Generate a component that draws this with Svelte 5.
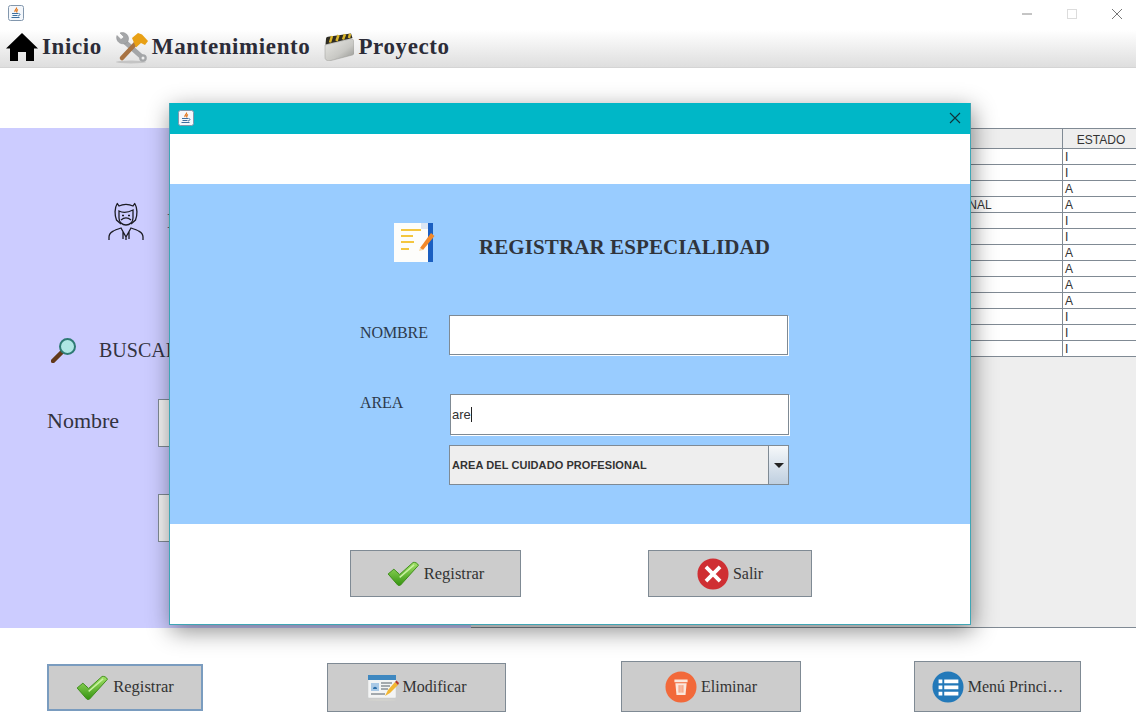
<script>
  const rows = [
    { area: '', estado: 'I' },
    { area: '', estado: 'I' },
    { area: '', estado: 'A' },
    { area: 'AREA DEL CUIDADO PROFESIONAL', estado: 'A' },
    { area: '', estado: 'I' },
    { area: '', estado: 'I' },
    { area: '', estado: 'A' },
    { area: '', estado: 'A' },
    { area: '', estado: 'A' },
    { area: '', estado: 'A' },
    { area: '', estado: 'I' },
    { area: '', estado: 'I' },
    { area: '', estado: 'I' }
  ];
</script>

{#snippet javaIcon()}
  <svg class="java" viewBox="0 0 16 16" width="16" height="16">
    <rect x="0.5" y="0.5" width="15" height="15" rx="2" fill="#f4f7fb" stroke="#8297ad" />
    <path d="M8.5 2.5c1 1.5-2.5 2.500-1.500 4.500M10 4.500c-2 1-1.500 2-1 3" fill="none" stroke="#e2761b" stroke-width="1.200" />
    <path d="M4 8.500h6M4.500 10.500h5M3.500 12.500h8" stroke="#3d6f9e" stroke-width="1" />
    <path d="M10.500 8.500c2 0 2 2-.5 2.500" fill="none" stroke="#3d6f9e" />
  </svg>
{/snippet}

{#snippet checkIcon()}
  <svg viewBox="0 0 34 26" width="33" height="25">
    <defs>
      <linearGradient id="chk" x1="0" y1="0" x2="0" y2="1">
        <stop offset="0" stop-color="#a4e36a" />
        <stop offset="1" stop-color="#34930f" />
      </linearGradient>
    </defs>
    <path d="M1 13.500 7 8.500 13 14 27 1.500c2-.5 5 1 5.500 3L14 25c-1 .8-2 .8-3 0z" fill="url(#chk)" stroke="#3c8c18" stroke-width="1" />
    <path d="M13 17 28 4" stroke="#c8f2a0" stroke-width="1.500" fill="none" />
  </svg>
{/snippet}

<div class="window">
  <div class="titlebar">
    <span class="title-icon">{@render javaIcon()}</span>
    <div class="controls">
      <svg viewBox="0 0 10 10" width="10" height="10"><path d="M0 5h10" stroke="#8a8a8a" /></svg>
      <svg viewBox="0 0 10 10" width="10" height="10"><rect x="0.500" y="0.500" width="9" height="9" fill="none" stroke="#dcdcdc" /></svg>
      <svg viewBox="0 0 10 10" width="10" height="10"><path d="M0 0l10 10M10 0L0 10" stroke="#777" /></svg>
    </div>
  </div>

  <nav class="menubar">
    <div class="menu">
      <svg viewBox="0 0 32 28" width="32" height="28">
        <path d="M16 0 32 15.500h-4V28h-8v-9h-8v9H4V15.500H0z" fill="#000" />
      </svg>
      <span>Inicio</span>
    </div>
    <div class="menu">
      <svg class="tools" viewBox="0 0 32 32" width="32" height="32">
        <ellipse cx="15" cy="30" rx="15" ry="1.500" fill="#c4c4c4" />
        <path d="M9 10 27 26" stroke="#a4a6a8" stroke-width="5" stroke-linecap="round" />
        <path d="M1 3.500 5 7.500 8 5 4 1c4-1.500 8 1 8.500 5 .2 2-.5 3.500-2 5-2.500 1.500-6.500 1-8.500-1.500C.5 7.500.3 5.500 1 3.500z" fill="#a4a6a8" stroke="#8a8c8e" stroke-width=".5" />
        <circle cx="27" cy="26" r="3.800" fill="#a4a6a8" />
        <circle cx="27" cy="26" r="1.500" fill="#eee" />
        <path d="M6 26 21 10" stroke="#a87342" stroke-width="4.500" stroke-linecap="round" />
        <path d="M16 6 22 1l4 1.500L32 9l-3 4-4-2-5 4.500z" fill="#e8a015" />
      </svg>
      <span>Mantenimiento</span>
    </div>
    <div class="menu">
      <svg viewBox="0 0 30 28" width="30" height="28">
        <defs>
          <linearGradient id="folder" x1="0" y1="0" x2="1" y2="1">
            <stop offset="0" stop-color="#e9e9e5" />
            <stop offset="0.600" stop-color="#c8c8c4" />
            <stop offset="1" stop-color="#8f908c" />
          </linearGradient>
        </defs>
        <path d="M1 12 26 6c2.500-.5 4 .5 4 3v11c0 1-.5 1.500-1.500 2L7 27.500c-3.500.8-6-.5-6-3z" fill="url(#folder)" stroke="#9a9a96" stroke-width=".5" />
        <path d="M2 6c0-1.500 1-2 2-2.200L27 .5l1.500 4.500L1.500 11.500z" fill="#2e2c22" />
        <path d="M8 3 6 9.500M14.500 2 12.500 8M21 1.200 19 6.500M26 .8 25 5" stroke="#dcb62a" stroke-width="2.500" />
      </svg>
      <span>Proyecto</span>
    </div>
  </nav>

  <div class="gap"></div>

  <main class="main">
    <section class="panel">
      <div class="agent">
        <svg viewBox="0 0 36 38" width="36" height="38" fill="none" stroke="#1c1c24" stroke-width="1.300">
          <path d="M9 1l2 3c4-2 10-2 14 0l2-3M9 2c-2.500 4-2.500 11-.5 16l4.500 4M27 2c2.500 4 2.500 11 .5 16l-4.500 4" />
          <path d="M11 9c5 2.500 10 1 14-1v8c0 4-3 7-7 7s-7-3-7-7zM13 18c3-2.500 7-2.500 10 0M14 13.500h2M20 13.500h2" />
          <path d="M1 38v-3c0-5 6-7 12-9l5 9 5-9c6 2 12 4 12 9v3M15 30v7M21 30v7M18 35v3" />
        </svg>
        <h2>ESPECIALIDADES</h2>
      </div>

      <div class="search-title">
        <svg viewBox="0 0 26 26" width="26" height="26">
          <path d="M11 15 2 24" stroke="#63391a" stroke-width="4.500" stroke-linecap="round" />
          <circle cx="16.500" cy="9.500" r="7.500" fill="#aee6e4" stroke="#2e7a74" stroke-width="2" />
        </svg>
        <span>BUSCAR</span>
      </div>

      <div class="field">
        <label for="buscar-nombre">Nombre</label>
        <input id="buscar-nombre" />
      </div>
      <div class="field second">
        <input aria-label="Area" />
      </div>
    </section>

    <section class="table-wrap">
      <table>
        <thead>
          <tr><th class="c1">CODIGO</th><th class="c2">AREA</th><th class="c3">ESTADO</th></tr>
        </thead>
        <tbody>
          {#each rows as row}
            <tr><td></td><td>{row.area}</td><td>{row.estado}</td></tr>
          {/each}
        </tbody>
      </table>
    </section>
  </main>

  <footer class="footer">
    <button class="btn focused">{@render checkIcon()}<span>Registrar</span></button>
    <button class="btn edit">
      <svg viewBox="0 0 32 28" width="32" height="28">
        <rect x="1" y="2" width="28" height="23" rx="1" fill="#f3f4f4" stroke="#c9cccc" stroke-width=".5" />
        <rect x="1" y="2" width="28" height="5" fill="#3f88c0" />
        <rect x="4" y="10" width="8" height="8" fill="#a9c9e6" />
        <path d="M6 16c0-3 4-3 4 0z" fill="#2b6ea8" />
        <path d="M14 10h11M14 13h9M14 16h7M4 21h14" stroke="#545f66" stroke-width="1" />
        <path d="M18 23l3-6 7-8 3 3-8 8z" fill="#f2b632" />
        <path d="M28 9l1.500-1.500 2.500 2.500L31 12z" fill="#b5352c" />
        <ellipse cx="15" cy="27" rx="14" ry="1" fill="#d2d2ce" />
      </svg>
      <span>Modificar</span>
    </button>
    <button class="btn trash">
      <svg viewBox="0 0 34 34" width="32" height="32">
        <circle cx="17" cy="17" r="16.500" fill="#f2693a" />
        <path d="M10 9h14v3H10zM11 13h12l-1.200 12.500h-9.600z" fill="#fbe7dc" />
        <path d="M15 15v8M17 15v8M19 15v8" stroke="#f2693a" stroke-width=".8" />
      </svg>
      <span>Eliminar</span>
    </button>
    <button class="btn menu-btn">
      <svg viewBox="0 0 34 34" width="32" height="32">
        <circle cx="17" cy="17" r="16.500" fill="#2379b9" />
        <path d="M7 9h4v4H7zM7 15.500h4v4H7zM7 22h4v4H7zM13 9h15v4H13zM13 15.500h15v4H13zM13 22h15v4H13z" fill="#fff" />
      </svg>
      <span>Menú Princi…</span>
    </button>
  </footer>

  <div class="dialog">
    <div class="dialog-title">
      {@render javaIcon()}
      <svg class="close" viewBox="0 0 12 12" width="12" height="12"><path d="M1 1l10 10M11 1 1 11" stroke="#10333a" stroke-width="1.100" /></svg>
    </div>
    <div class="dialog-top"></div>
    <div class="dialog-form">
      <div class="dialog-head">
        <svg viewBox="0 0 41 40" width="41" height="40">
          <rect x="0" y="0" width="38" height="39" fill="#fdfdfb" />
          <rect x="34" y="0" width="5" height="39" fill="#1b5fc1" />
          <path d="M27 0h7v6h-7z" fill="#dbe6f3" />
          <path d="M7 7h20M7 13h12M7 19h13M7 26h8" stroke="#f4c63f" stroke-width="2" />
          <path d="M26 25 37 10l3.500 3L29 27z" fill="#f2892a" />
          <path d="M26 25l-1 3 4-1z" fill="#f5d9a8" />
        </svg>
        <h1>REGISTRAR ESPECIALIDAD</h1>
      </div>
      <div class="row nombre">
        <label for="esp-nombre">NOMBRE</label>
        <input id="esp-nombre" />
      </div>
      <div class="row area">
        <label for="esp-area">AREA</label>
        <div class="area-fields">
          <div id="esp-area" class="text-input">are<i class="caret"></i></div>
          <div class="combo">
            <span>AREA DEL CUIDADO PROFESIONAL</span>
            <div class="arrow"><b></b></div>
          </div>
        </div>
      </div>
    </div>
    <div class="dialog-actions">
      <button class="btn save">{@render checkIcon()}<span>Registrar</span></button>
      <button class="btn exit">
        <svg viewBox="0 0 34 34" width="32" height="32">
          <circle cx="17" cy="17" r="16.500" fill="#cf2f33" />
          <path d="M9.500 9.500l15 15M24.500 9.500l-15 15" stroke="#fff" stroke-width="4" />
        </svg>
        <span>Salir</span>
      </button>
    </div>
  </div>
</div>

<style>
  :global(body) {
    margin: 0;
    background: #fff;
  }

  .window {
    position: relative;
    width: 1136px;
    height: 726px;
    overflow: hidden;
    background: #fff;
    color: #333340;
    font-family: "Liberation Serif", serif;
  }

  .titlebar {
    height: 30px;
    display: flex;
    align-items: center;
    justify-content: space-between;
  }

  .title-icon {
    display: flex;
    margin: -4px 0 0 8px;
  }

  .controls {
    display: flex;
    gap: 35px;
    margin: -2px 14px 0 0;
  }

  .java {
    display: block;
  }

  .menubar {
    height: 33px;
    display: flex;
    align-items: center;
    gap: 14px;
    padding: 0 0 4px 6px;
    border-bottom: 1px solid #d4d4d4;
    background: linear-gradient(#ffffff, #dedede);
  }

  .menu {
    display: flex;
    align-items: center;
    gap: 4px;
    font-size: 23px;
    font-weight: bold;
    letter-spacing: 0.6px;
    color: #2c2c38;
  }

  .tools {
    margin-top: 2px;
  }

  .gap {
    height: 60px;
  }

  .main {
    height: 500px;
    display: flex;
  }

  .panel {
    width: 471px;
    flex: none;
    box-sizing: border-box;
    background: #ccccff;
    padding-top: 74px;
  }

  .agent {
    display: flex;
    align-items: center;
    gap: 23px;
    padding-left: 108px;
  }

  .agent h2 {
    margin: 0;
    font-size: 21px;
    font-weight: normal;
    white-space: nowrap;
  }

  .search-title {
    display: flex;
    align-items: center;
    gap: 22px;
    margin-top: 97px;
    padding-left: 51px;
    font-size: 20px;
  }

  .field {
    display: flex;
    align-items: center;
    margin-top: 36px;
    padding-left: 47px;
  }

  .field label {
    width: 111px;
    padding-bottom: 4px;
    font-size: 22px;
  }

  .field input {
    width: 250px;
    height: 48px;
    box-sizing: border-box;
    border: 1px solid #7f8a94;
    background: #f4f4f4;
  }

  .field.second {
    margin-top: 47px;
    padding-left: 158px;
  }

  .table-wrap {
    flex: 1;
    min-width: 0;
    overflow: hidden;
    box-sizing: border-box;
    background: #eeeeee;
    border-bottom: 1px solid #808a94;
  }

  table {
    width: 669px;
    table-layout: fixed;
    border-collapse: collapse;
    font-family: "Liberation Sans", sans-serif;
    font-size: 12px;
    color: #333;
    background: #fff;
  }

  th {
    height: 17px;
    padding: 2px 0 0;
    font-weight: normal;
    background: #eeeeee;
    border: 1px solid #808a94;
    border-left: 0;
  }

  td {
    height: 14px;
    padding: 1px 0 0 2px;
    line-height: 14px;
    white-space: nowrap;
    overflow: hidden;
    border-bottom: 1px solid #808a94;
    border-right: 1px solid #808a94;
  }

  .c1 {
    width: 312px;
  }

  .c2 {
    width: 278px;
  }

  .footer {
    display: flex;
    align-items: center;
    height: 76px;
    padding: 21px 0 0 47px;
  }

  .btn {
    display: flex;
    align-items: center;
    justify-content: center;
    gap: 4px;
    box-sizing: border-box;
    padding: 0;
    border: 1px solid #7f8a94;
    background: #cccccc;
    color: #333;
    font-family: "Liberation Serif", serif;
    font-size: 16px;
    flex: none;
  }

  .focused {
    width: 156px;
    height: 47px;
    border: 2px solid #7a9cbf;
    font-size: 16.5px;
  }

  .edit {
    width: 179px;
    height: 49px;
    margin-left: 124px;
  }

  .trash,
  .menu-btn {
    height: 51px;
    margin-top: -1px;
  }

  .trash {
    width: 180px;
    margin-left: 115px;
  }

  .menu-btn {
    width: 167px;
    margin-left: 113px;
  }

  /* modal window, sits over the page */
  .dialog {
    position: absolute;
    left: 169px;
    top: 103px;
    width: 802px;
    height: 522px;
    box-sizing: border-box;
    display: flex;
    flex-direction: column;
    background: #fff;
    border: 1px solid #3fa6b5;
    border-top: 0;
    box-shadow: 2px 6px 22px rgba(0, 0, 0, 0.45);
  }

  .dialog-title {
    height: 31px;
    flex: none;
    display: flex;
    align-items: center;
    justify-content: space-between;
    padding: 0 9px 2px 8px;
    box-sizing: border-box;
    background: #00b7c7;
  }

  .dialog-top {
    height: 50px;
    flex: none;
  }

  .dialog-form {
    height: 340px;
    flex: none;
    background: #99ccff;
  }

  .dialog-head {
    display: flex;
    align-items: center;
    gap: 44px;
    padding: 39px 0 0 224px;
  }

  .dialog-head h1 {
    margin: 8px 0 0;
    font-size: 21px;
    letter-spacing: 0.1px;
    white-space: nowrap;
    color: #30343c;
  }

  .row {
    display: flex;
    align-items: flex-start;
    padding-left: 190px;
  }

  .row label {
    width: 89px;
    font-size: 16px;
    letter-spacing: -0.1px;
    color: #2d3a4c;
  }

  .nombre {
    margin-top: 52px;
  }

  .nombre label {
    padding-top: 9px;
  }

  .nombre input {
    width: 339px;
    height: 40px;
    box-sizing: border-box;
    border: 1px solid #7f8a94;
    box-shadow: 1px 1px 0 #fff;
    background: #fff;
  }

  .area {
    margin-top: 39px;
  }

  .area-fields {
    width: 340px;
    display: flex;
    flex-direction: column;
    gap: 10px;
  }

  .text-input {
    width: 339px;
    height: 41px;
    margin-left: 1px;
    box-sizing: border-box;
    display: flex;
    align-items: center;
    padding-left: 1px;
    border: 1px solid #7f8a94;
    box-shadow: 1px 1px 0 #fff;
    background: #fff;
    font-family: "Liberation Sans", sans-serif;
    font-size: 13px;
    color: #333;
  }

  .caret {
    width: 1px;
    height: 15px;
    background: #222;
  }

  .combo {
    height: 40px;
    box-sizing: border-box;
    display: flex;
    align-items: stretch;
    border: 1px solid #7f8a94;
    background: #eeeeee;
    font-family: "Liberation Sans", sans-serif;
    font-size: 11px;
    letter-spacing: 0.08px;
    font-weight: bold;
    color: #333;
  }

  .combo span {
    flex: 1;
    align-self: center;
    padding-left: 2px;
  }

  .arrow {
    width: 19px;
    display: flex;
    align-items: center;
    justify-content: center;
    border-left: 1px solid #7f8a94;
    background: linear-gradient(#f6f8fa, #bfcfe0);
  }

  .arrow b {
    border: 5px solid transparent;
    border-top: 5px solid #222;
    border-bottom: 0;
  }

  .dialog-actions {
    flex: 1;
    display: flex;
    align-items: flex-start;
    padding: 26px 0 0 180px;
    gap: 127px;
  }

  .save {
    width: 171px;
    height: 47px;
    font-size: 16.5px;
  }

  .exit {
    width: 164px;
    height: 47px;
  }
</style>
